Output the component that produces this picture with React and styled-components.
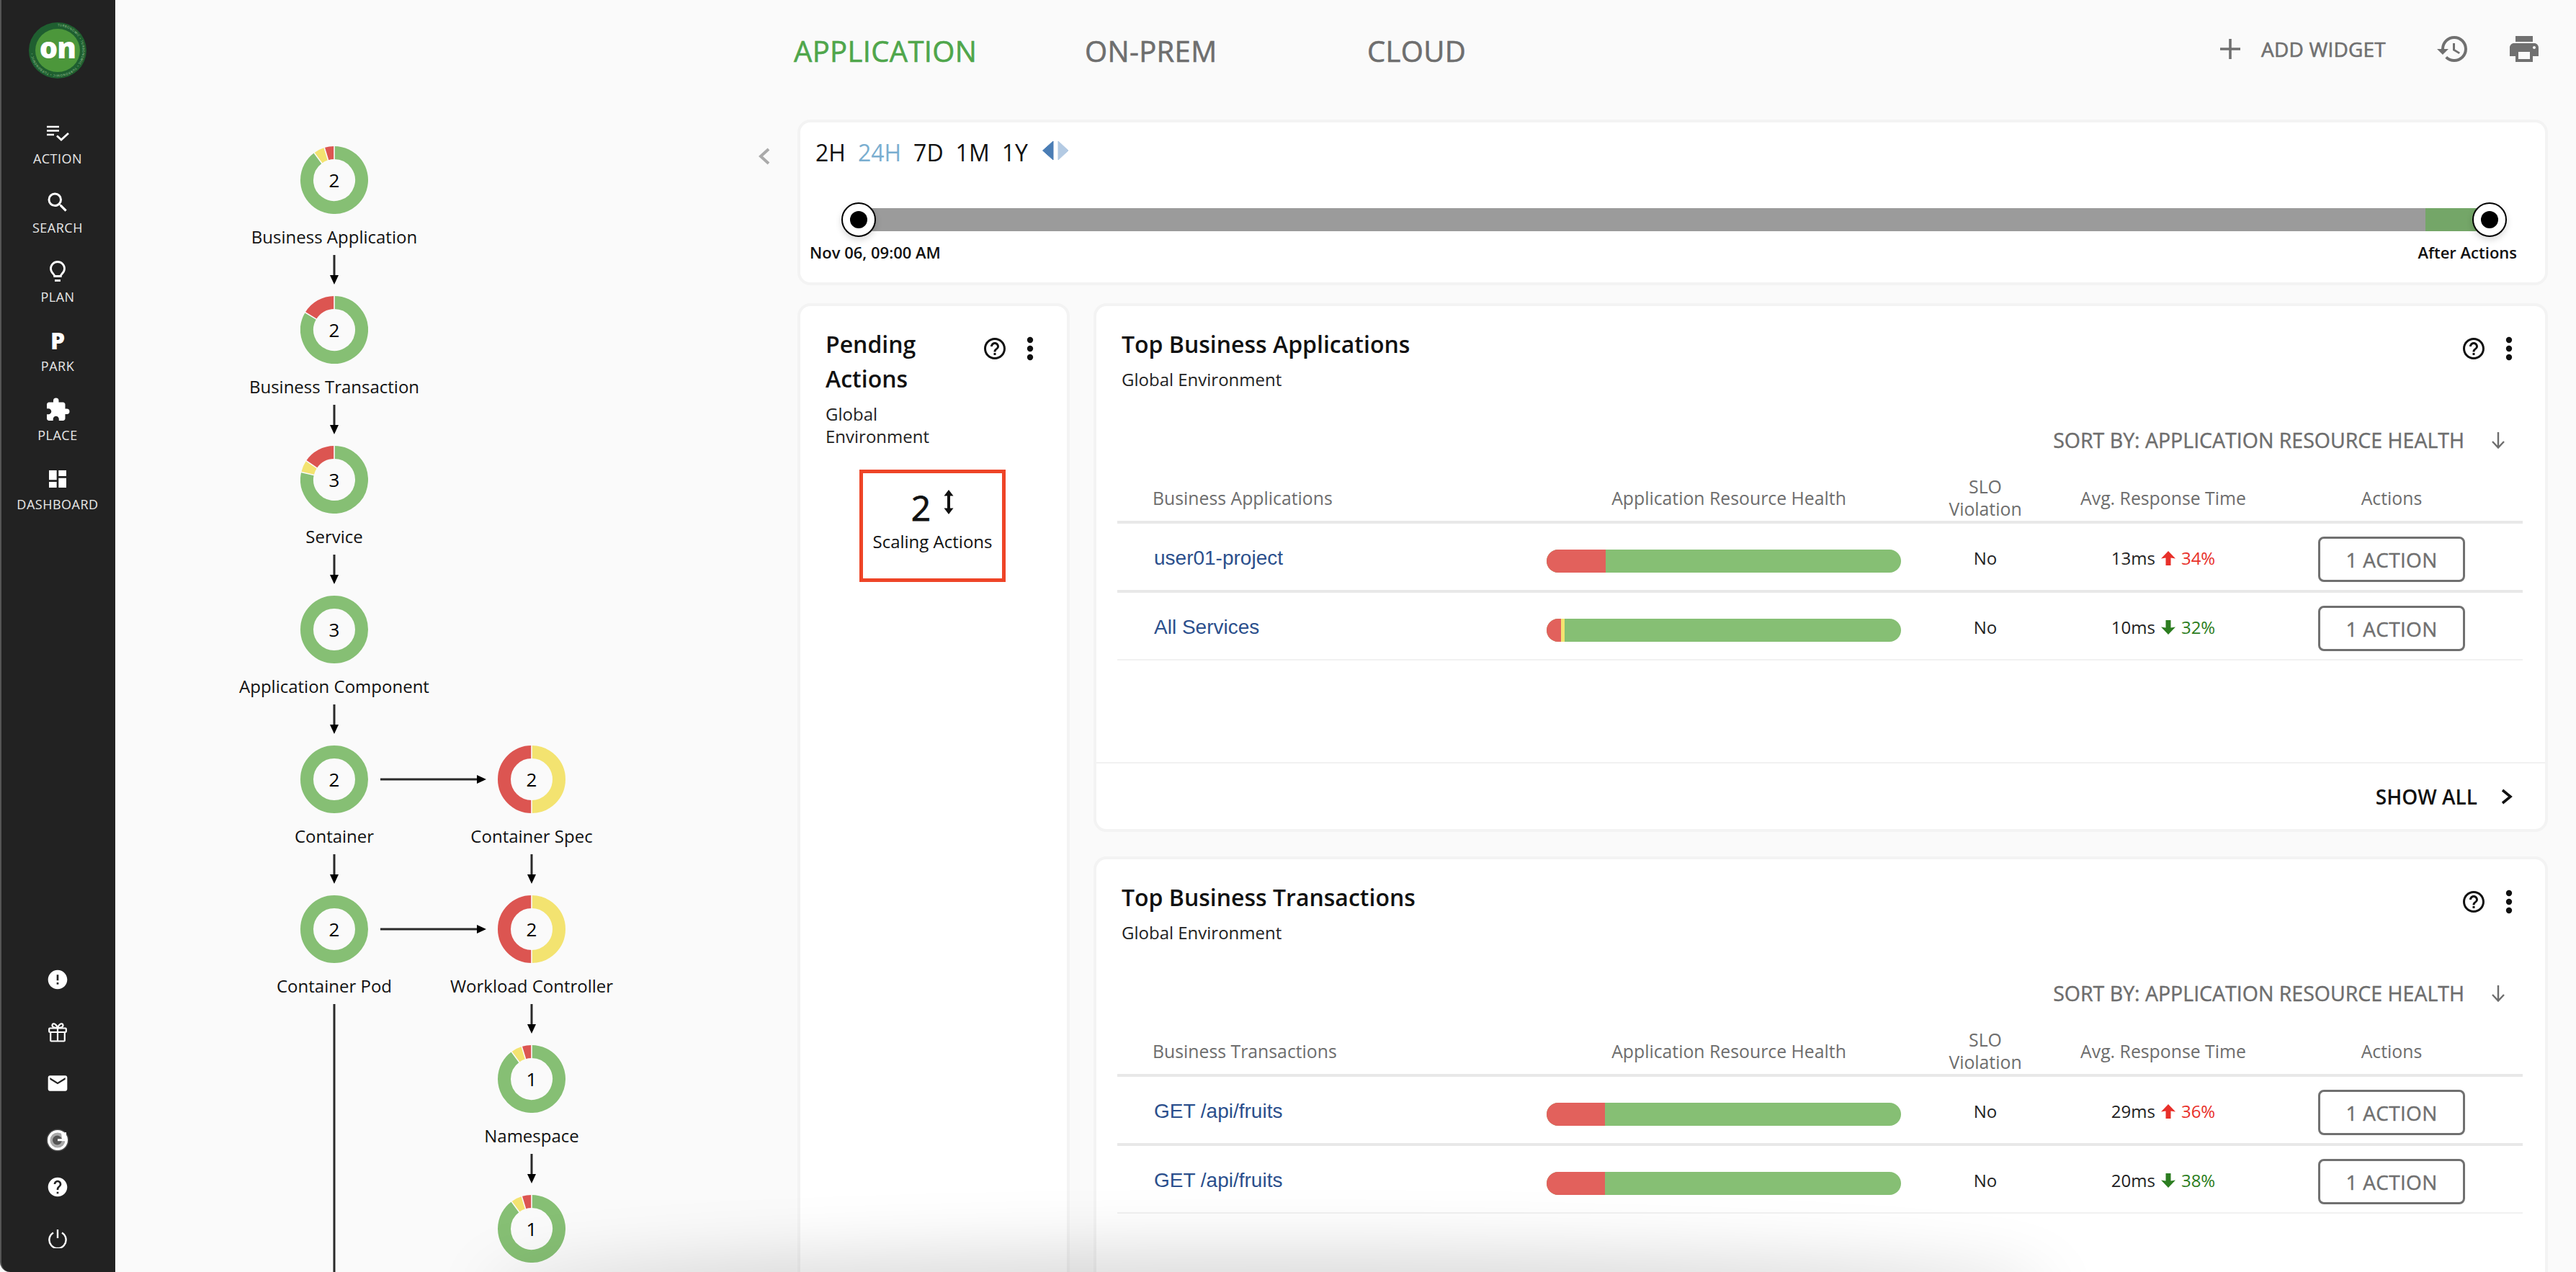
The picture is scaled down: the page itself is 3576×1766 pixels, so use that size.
import React from "react";
import styled, { createGlobalStyle } from "styled-components";
import { MdHistory, MdPrint, MdHelpOutline, MdHelp, MdError, MdEmail, MdExtension, MdDashboard, MdSearch } from "react-icons/md";

const Global = createGlobalStyle`
  html, body { margin: 0; padding: 0; background: #fafafa; }
  * { box-sizing: border-box; }
  body { font-family: "Open Sans", "Liberation Sans", sans-serif; color: #111; }
`;

const Root = styled.div`
  position: relative;
  display: flex;
  width: 3576px;
  height: 1766px;
  overflow: hidden;
  background: #fafafa;
`;

/* ---------- sidebar ---------- */
const Sidebar = styled.aside`
  flex: 0 0 160px;
  display: flex;
  flex-direction: column;
  align-items: center;
  padding: 31px 0 26px;
  background: #222;
  border-left: 2px solid #555;
  border-bottom-left-radius: 14px;
  color: #fff;
`;
const Logo = styled.svg`
  width: 80px;
  height: 78px;
  flex: none;
  margin-left: -2px;
`;
const Nav = styled.nav`
  margin-top: 58px;
  display: flex;
  flex-direction: column;
  align-items: center;
  margin-left: -2px;
`;
const NavItem = styled.div`
  height: 96px;
  display: flex;
  flex-direction: column;
  align-items: center;
`;
const NavIcon = styled.div`
  height: 36px;
  display: flex;
  align-items: center;
  justify-content: center;
  color: #fff;
  font-weight: 800;
  font-size: 32px;
  line-height: 36px;
`;
const NavLabel = styled.div`
  margin-top: 5px;
  font-size: 18px;
  line-height: 24px;
  color: #e8e8e8;
  letter-spacing: 0.5px;
`;
const Utilities = styled.div`
  margin-top: auto;
  margin-left: -2px;
  display: flex;
  flex-direction: column;
  align-items: center;
`;
const Utility = styled.div`
  width: 40px;
  height: 40px;
  margin-top: ${(p) => p.$gap || 0}px;
  display: flex;
  align-items: center;
  justify-content: center;
  color: #fff;
`;

/* ---------- top bar ---------- */
const Content = styled.div`
  flex: 1;
  min-width: 0;
  display: flex;
  flex-direction: column;
`;
const TopBar = styled.header`
  flex: 0 0 166px;
  display: flex;
  align-items: center;
  justify-content: space-between;
  padding: 0 48px 30px 942px;
`;
const Tabs = styled.div`
  display: grid;
  grid-template-columns: 404px 392px auto;
  margin-top: 6px;
`;
const Tab = styled.div`
  font-size: 40px;
  line-height: 54px;
  letter-spacing: 0.35px;
  -webkit-text-stroke: 0.6px currentColor;
  color: ${(p) => (p.$active ? "#4fa64b" : "#6e6e6e")};
`;
const TopActions = styled.div`
  display: flex;
  align-items: center;
  color: #707070;
`;
const AddWidget = styled.div`
  display: flex;
  align-items: center;
  gap: 29px;
  margin-right: 69px;
  font-size: 28px;
  line-height: 38px;
  letter-spacing: 0.2px;
  -webkit-text-stroke: 0.6px currentColor;
`;
const PrintSlot = styled.div`
  margin-left: 51px;
  display: flex;
`;

/* ---------- body ---------- */
const Body = styled.div`
  flex: 1;
  min-height: 0;
  display: flex;
`;
const Topology = styled.section`
  flex: 0 0 947px;
  display: flex;
`;
const Graph = styled.div`
  flex: 1;
  padding: 37px 0 0 167px;
  display: grid;
  grid-template-columns: 274px 274px;
  grid-auto-rows: 208px;
  align-content: start;
`;
const Node = styled.div`
  position: relative;
  grid-column: ${(p) => p.$col};
  grid-row: ${(p) => p.$row};
  display: flex;
  flex-direction: column;
  align-items: center;
`;
const DonutBox = styled.div`
  position: relative;
  width: 94px;
  height: 94px;
  flex: none;
  display: flex;
  align-items: center;
  justify-content: center;
  font-size: 26px;
  line-height: 26px;
  color: #000;
`;
const DonutSvg = styled.svg`
  position: absolute;
  inset: 0;
`;
const DonutCount = styled.span`
  position: relative;
`;
const NodeLabel = styled.div`
  margin-top: 16px;
  font-size: 24px;
  line-height: 32px;
  white-space: nowrap;
  color: #111;
`;
const DownArrow = styled.svg`
  flex: none;
  margin-top: 9px;
  display: block;
`;
const SideArrow = styled.svg`
  position: absolute;
  top: 41px;
  left: calc(50% + 64px);
`;
const Collapse = styled.div`
  flex: none;
  margin: 39px 38px 0 0;
`;

const Main = styled.main`
  flex: 0 0 2430px;
  display: flex;
  flex-direction: column;
  gap: 25px;
`;
const panel = `
  background: #fff;
  border: 4px solid #f3f3f3;
  border-radius: 18px;
`;
const Timeline = styled.section`
  ${panel}
  padding: 20px 0 27px;
`;
const Ranges = styled.div`
  display: flex;
  align-items: center;
  gap: 17px;
  padding-left: 21px;
`;
const Range = styled.div`
  font-size: 32px;
  line-height: 44px;
  color: ${(p) => (p.$active ? "#7aaed0" : "#111")};
`;
const Stepper = styled.svg`
  margin: -6px 0 0 2px;
`;
const Track = styled.div`
  position: relative;
  height: 32px;
  margin: 55px 77px 0 81px;
  background: #9b9b9b;
`;
const TrackFill = styled.div`
  position: absolute;
  top: 0;
  right: 0;
  bottom: 0;
  width: 89px;
  background: #74a668;
`;
const Handle = styled.div`
  position: absolute;
  top: -8px;
  ${(p) => (p.$end ? "right: -24px;" : "left: -24px;")}
  width: 48px;
  height: 48px;
  display: flex;
  align-items: center;
  justify-content: center;
  background: #fff;
  border: 2.5px solid #000;
  border-radius: 50%;
  box-shadow: 0 4px 10px rgba(0, 0, 0, 0.15);
  &::after {
    content: "";
    width: 24px;
    height: 24px;
    border-radius: 50%;
    background: #000;
  }
`;
const TrackLabels = styled.div`
  display: flex;
  justify-content: space-between;
  margin-top: 14px;
  padding: 0 39px 0 13px;
  font-size: 22px;
  line-height: 30px;
  font-weight: 600;
`;
const Widgets = styled.div`
  display: flex;
  gap: 33px;
  align-items: stretch;
`;
const Pending = styled.section`
  ${panel}
  flex: 0 0 378px;
  height: 1500px;
  padding: 29px 46px 0 35px;
`;
const WideColumn = styled.div`
  flex: 1;
  display: flex;
  flex-direction: column;
  gap: 34px;
`;
const WideCard = styled.section`
  ${panel}
  height: 734px;
  display: flex;
  flex-direction: column;
`;
const CardHead = styled.div`
  display: flex;
  justify-content: space-between;
  align-items: flex-start;
  padding: ${(p) => (p.$flush ? "0" : "29px 45px 0 35px")};
`;
const TitleBlock = styled.div`
  max-width: ${(p) => (p.$narrow ? "200px" : "none")};
`;
const CardTitle = styled.h2`
  margin: 0;
  font-size: 32px;
  line-height: 48px;
  font-weight: 600;
  color: #111;
`;
const CardSub = styled.div`
  margin-top: 9px;
  font-size: 24px;
  line-height: 31px;
  color: #222;
`;
const CardIcons = styled.div`
  display: flex;
  align-items: center;
  gap: 26px;
  height: 36px;
  margin-top: 12px;
  color: #111;
`;
const ScaleBox = styled.div`
  width: 203px;
  height: 156px;
  margin: 31px 0 0 47px;
  padding-top: 24px;
  border: 5px solid #ee4427;
  text-align: center;
`;
const ScaleRow = styled.div`
  display: flex;
  justify-content: center;
  align-items: flex-start;
  gap: 18px;
  font-size: 48px;
  line-height: 48px;
  -webkit-text-stroke: 0.8px currentColor;
`;
const ScaleArrow = styled.svg`
  margin-top: -1px;
`;
const ScaleText = styled.div`
  margin-top: 7px;
  font-size: 24px;
  line-height: 31px;
  color: #111;
`;
const SortBar = styled.div`
  display: flex;
  justify-content: flex-end;
  align-items: center;
  gap: 36px;
  margin-top: 50px;
  padding-right: 54px;
  font-size: 28.5px;
  line-height: 38px;
  -webkit-text-stroke: 0.4px currentColor;
  color: #6d6d6d;
`;
const Table = styled.div`
  margin: 30px 31px 0 29px;
`;
const columns = `
  display: grid;
  grid-template-columns: 596px 506px 206px 288px 346px 1fr;
  align-items: center;
`;
const HeadRow = styled.div`
  ${columns}
  height: 67px;
  padding-bottom: 4px;
  border-bottom: 4px solid #e8e8e8;
  font-size: 24.8px;
  line-height: 31px;
  color: #6d6d6d;
`;
const HeadCell = styled.div`
  text-align: ${(p) => (p.$left ? "left" : "center")};
  padding-left: ${(p) => (p.$left ? "49px" : "0")};
`;
const Row = styled.div`
  ${columns}
  height: ${(p) => (p.$last ? "94px" : "96px")};
  padding-top: 4px;
  border-bottom: ${(p) => (p.$last ? "2px solid #f1f1f1" : "4px solid #e8e8e8")};
  font-size: 24px;
  line-height: 32px;
  color: #222;
`;
const NameCell = styled.div`
  padding-left: 51px;
  font-family: "Liberation Sans", Arial, sans-serif;
  font-size: 28px;
  line-height: 34px;
  color: #2b4f8c;
`;
const Bar = styled.div`
  display: flex;
  width: 492px;
  height: 32px;
  margin-top: 8px;
  border-radius: 16px;
  overflow: hidden;
  background: #86bf74;
`;
const BarPart = styled.div`
  height: 100%;
  flex: none;
  background: ${(p) => p.$color};
`;
const CenterCell = styled.div`
  display: flex;
  justify-content: center;
  align-items: center;
  gap: 8px;
`;
const Delta = styled.span`
  display: flex;
  align-items: center;
  gap: 8px;
  color: ${(p) => (p.$up ? "#e8302a" : "#2c7d20")};
`;
const ActionButton = styled.div`
  width: 204px;
  height: 63px;
  margin-top: 3px;
  display: flex;
  align-items: center;
  justify-content: center;
  border: 3px solid #707070;
  border-radius: 8px;
  font-size: 28px;
  letter-spacing: 0.3px;
  -webkit-text-stroke: 0.4px currentColor;
  color: #707070;
  background: #fff;
`;
const CardFooter = styled.div`
  margin-top: auto;
  height: 93px;
  display: flex;
  justify-content: flex-end;
  align-items: center;
  gap: 33px;
  padding-right: 45px;
  border-top: 2px solid #f1f1f1;
  font-size: 28px;
  font-weight: 600;
  color: #111;
`;
const WindowShadow = styled.div`
  position: absolute;
  left: 700px;
  width: 2120px;
  bottom: -60px;
  height: 60px;
  pointer-events: none;
  box-shadow: 0 0 90px 30px rgba(0, 0, 0, 0.15);
  border-radius: 50%;
`;

/* ---------- drawings ---------- */
const GREEN = "#86bf74";
const RED = "#dc5551";
const YELLOW = "#f3e370";

const polar = (deg, r) => {
  const a = (deg * Math.PI) / 180;
  return [47 + r * Math.sin(a), 47 - r * Math.cos(a)];
};
function Donut({ count, segments }) {
  let start = 0;
  const parts = [];
  const seps = [];
  if (segments.length > 1) {
    segments.forEach(([color, sweep], i) => {
      const end = start + sweep;
      const [x0, y0] = polar(start, 38);
      const [x1, y1] = polar(end, 38);
      parts.push(
        <path
          key={i}
          d={`M${x0} ${y0}A38 38 0 ${sweep > 180 ? 1 : 0} 1 ${x1} ${y1}`}
          fill="none"
          stroke={color}
          strokeWidth="18"
        />
      );
      start = end;
      const [sx0, sy0] = polar(start, 28);
      const [sx1, sy1] = polar(start, 48);
      seps.push(<line key={i} x1={sx0} y1={sy0} x2={sx1} y2={sy1} stroke="#fafafa" strokeWidth="1.6" />);
    });
  } else {
    parts.push(<circle key="0" cx="47" cy="47" r="38" fill="none" stroke={segments[0][0]} strokeWidth="18" />);
  }
  return (
    <DonutBox>
      <DonutSvg viewBox="0 0 94 94" width="94" height="94">
        {parts}
        {seps}
      </DonutSvg>
      <DonutCount>{count}</DonutCount>
    </DonutBox>
  );
}
function Down({ h = 41 }) {
  return (
    <DownArrow width="14" height={h} viewBox={`0 0 14 ${h}`}>
      <rect x="5.5" y="0" width="3" height={h - 10} fill="#2a2a2a" />
      <path d={`M1 ${h - 13}H13L7 ${h}Z`} fill="#000" />
    </DownArrow>
  );
}
const Right = () => (
  <SideArrow width="147" height="12" viewBox="0 0 147 12">
    <rect x="0" y="4.5" width="136" height="3" fill="#2a2a2a" />
    <path d="M134 0L147 6L134 12Z" fill="#000" />
  </SideArrow>
);
const Line = ({ h }) => (
  <DownArrow width="14" height={h} viewBox={`0 0 14 ${h}`}>
    <rect x="5.5" y="0" width="3" height={h} fill="#2a2a2a" />
  </DownArrow>
);
const Dots = () => (
  <svg width="10" height="34" viewBox="0 0 10 34" fill="currentColor">
    <circle cx="5" cy="5" r="4.2" />
    <circle cx="5" cy="17" r="4.2" />
    <circle cx="5" cy="29" r="4.2" />
  </svg>
);
const Icons = () => (
  <CardIcons>
    <MdHelpOutline size={36} />
    <Dots />
  </CardIcons>
);
const Tri = ({ up }) => (
  <svg width="20" height="20" viewBox="0 0 20 20" fill={up ? "#e8302a" : "#2c7d20"}>
    <path
      d={up ? "M10 0L20 10.5L13.5 9.5V20H6.5V9.5L0 10.5Z" : "M10 20L20 9.5L13.5 10.5V0H6.5V10.5L0 9.5Z"}
    />
  </svg>
);
const LogoMark = () => (
  <Logo viewBox="0 0 80 78">
    <defs>
      <path id="ring" d="M40 5.5a34.5 33.5 0 1 1 -.01 0" />
    </defs>
    <ellipse cx="40" cy="39" rx="40" ry="39" fill="#1f5f30" />
    <text fontFamily="Open Sans" fontSize="4.2" fill="#a9cfa0" letterSpacing="0.6">
      <textPath href="#ring">TURBONOMIC • TURBONOMIC • TURBONOMIC • TURBONOMIC •</textPath>
    </text>
    <ellipse cx="40" cy="39" rx="31" ry="30" fill="#4c973b" />
    <text
      x="40"
      y="50"
      textAnchor="middle"
      fontFamily="Open Sans"
      fontWeight="800"
      fontSize="40"
      fill="#fff"
      letterSpacing="-1"
    >
      on
    </text>
  </Logo>
);
const ActionIcon = () => (
  <svg width="32" height="24" viewBox="0 0 32 24" fill="none" stroke="#fff" strokeWidth="2.4">
    <path d="M1 3H18M1 8.5H18M1 14H11" />
    <path d="M15 15.5L21 21L31 12" strokeWidth="2.8" />
  </svg>
);
const BulbIcon = () => (
  <svg width="22" height="30" viewBox="0 0 22 30" fill="none" stroke="#fff" strokeWidth="2.8">
    <path d="M11 1.5A9.5 9.5 0 0 0 1.5 11c0 3.3 1.7 5.6 3.6 7.4 1.2 1.1 1.6 2.1 1.6 3.1h8.6c0-1 .4-2 1.6-3.1 1.9-1.8 3.6-4.1 3.6-7.4A9.5 9.5 0 0 0 11 1.5Z" />
    <path d="M7 27.5H15" />
  </svg>
);
const GiftIcon = () => (
  <svg width="26" height="28" viewBox="0 0 26 28" fill="none" stroke="#fff" strokeWidth="2.2">
    <rect x="1.2" y="8.5" width="23.6" height="5.5" rx="1" />
    <rect x="3.2" y="14" width="19.6" height="12.5" rx="1" />
    <path d="M13 8.5V26.5" />
    <path d="M13 8C11 2 6 .5 5.5 4.5 5.2 7 9 8 13 8ZM13 8C15 2 20 .5 20.5 4.5 20.8 7 17 8 13 8Z" />
  </svg>
);
const GIcon = () => (
  <svg width="32" height="32" viewBox="0 0 32 32">
    <circle cx="16" cy="16" r="15.5" fill="#4a4a4a" />
    <circle cx="16" cy="16" r="14" fill="#fff" />
    <circle cx="16" cy="16" r="10.5" fill="#a8a8a8" />
    <circle cx="15.5" cy="16" r="6.5" fill="#555" />
    <path d="M16 14.2H30V17.2H16Z" fill="#fff" />
    <path d="M21 6L28 5V14H22Z" fill="#fff" />
  </svg>
);
const PowerIcon = () => (
  <svg width="26" height="26" viewBox="0 0 26 26" fill="none" stroke="#fff" strokeWidth="2.4">
    <path d="M7 4.5A11.6 11.6 0 1 0 19 4.5" />
    <path d="M13 0V12" />
  </svg>
);
const Plus = () => (
  <svg width="28" height="28" viewBox="0 0 28 28" stroke="#707070" strokeWidth="3.6">
    <path d="M14 0V28M0 14H28" />
  </svg>
);

const NODES = [
  { label: "Business Application", count: 2, col: 1, row: 1, seg: [[GREEN, 323.6], [YELLOW, 19.4], [RED, 17]], down: 41 },
  { label: "Business Transaction", count: 2, col: 1, row: 2, seg: [[GREEN, 301], [RED, 59]], down: 41 },
  { label: "Service", count: 3, col: 1, row: 3, seg: [[GREEN, 283], [YELLOW, 21], [RED, 56]], down: 41 },
  { label: "Application Component", count: 3, col: 1, row: 4, seg: [[GREEN, 360]], down: 41 },
  { label: "Container", count: 2, col: 1, row: 5, seg: [[GREEN, 360]], down: 41, side: true },
  { label: "Container Pod", count: 2, col: 1, row: 6, seg: [[GREEN, 360]], line: 380, side: true },
  { label: "Container Spec", count: 2, col: 2, row: 5, seg: [[YELLOW, 180], [RED, 180]], down: 41 },
  { label: "Workload Controller", count: 2, col: 2, row: 6, seg: [[YELLOW, 180], [RED, 180]], down: 41 },
  { label: "Namespace", count: 1, col: 2, row: 7, seg: [[GREEN, 323.6], [YELLOW, 19.4], [RED, 17]], down: 41 },
  { count: 1, col: 2, row: 8, seg: [[GREEN, 323.6], [YELLOW, 19.4], [RED, 17]] },
];

const NAV = [
  ["ACTION", <ActionIcon />],
  ["SEARCH", <MdSearch size={36} />],
  ["PLAN", <BulbIcon />],
  ["PARK", "P"],
  ["PLACE", <MdExtension size={36} />],
  ["DASHBOARD", <MdDashboard size={32} />],
];

function Widget({ title, nameHead, rows, footer }) {
  return (
    <WideCard>
      <CardHead>
        <TitleBlock>
          <CardTitle>{title}</CardTitle>
          <CardSub>Global Environment</CardSub>
        </TitleBlock>
        <Icons />
      </CardHead>
      <SortBar>
        <span>SORT BY: APPLICATION RESOURCE HEALTH</span>
        <svg width="22" height="24" viewBox="0 0 22 24" fill="none" stroke="#6d6d6d" strokeWidth="2.4">
          <path d="M11 1V22M3 14L11 22.5L19 14" />
        </svg>
      </SortBar>
      <Table>
        <HeadRow>
          <HeadCell $left>{nameHead}</HeadCell>
          <HeadCell>Application Resource Health</HeadCell>
          <HeadCell>
            SLO
            <br />
            Violation
          </HeadCell>
          <HeadCell>Avg. Response Time</HeadCell>
          <HeadCell>Actions</HeadCell>
        </HeadRow>
        {rows.map((r, i) => (
          <Row key={i} $last={i === rows.length - 1}>
            <NameCell>{r.name}</NameCell>
            <Bar>
              <BarPart $color="#e2615c" style={{ width: r.red }} />
              {r.yellow ? <BarPart $color={YELLOW} style={{ width: r.yellow }} /> : null}
            </Bar>
            <CenterCell>No</CenterCell>
            <CenterCell>
              <span>{r.ms}</span>
              <Delta $up={r.up}>
                <Tri up={r.up} />
                {r.pct}
              </Delta>
            </CenterCell>
            <CenterCell>
              <ActionButton>1 ACTION</ActionButton>
            </CenterCell>
          </Row>
        ))}
      </Table>
      {footer ? (
        <CardFooter>
          <span>SHOW ALL</span>
          <svg width="16" height="22" viewBox="0 0 16 22" fill="none" stroke="#111" strokeWidth="3.6">
            <path d="M2 2L13 11L2 20" />
          </svg>
        </CardFooter>
      ) : null}
    </WideCard>
  );
}

export default function App() {
  return (
    <Root>
      <Global />
      <Sidebar>
        <LogoMark />
        <Nav>
          {NAV.map(([label, icon]) => (
            <NavItem key={label}>
              <NavIcon>{icon}</NavIcon>
              <NavLabel>{label}</NavLabel>
            </NavItem>
          ))}
        </Nav>
        <Utilities>
          <Utility><MdError size={32} /></Utility>
          <Utility $gap={33}><GiftIcon /></Utility>
          <Utility $gap={31}><MdEmail size={32} /></Utility>
          <Utility $gap={39}><GIcon /></Utility>
          <Utility $gap={25}><MdHelp size={32} /></Utility>
          <Utility $gap={32}><PowerIcon /></Utility>
        </Utilities>
      </Sidebar>
      <Content>
        <TopBar>
          <Tabs>
            <Tab $active>APPLICATION</Tab>
            <Tab>ON-PREM</Tab>
            <Tab>CLOUD</Tab>
          </Tabs>
          <TopActions>
            <AddWidget>
              <Plus />
              <span>ADD WIDGET</span>
            </AddWidget>
            <MdHistory size={48} />
            <PrintSlot><MdPrint size={48} /></PrintSlot>
          </TopActions>
        </TopBar>
        <Body>
          <Topology>
            <Graph>
              {NODES.map((n, i) => (
                <Node key={i} $col={n.col} $row={n.row}>
                  <Donut count={n.count} segments={n.seg} />
                  {n.label ? <NodeLabel>{n.label}</NodeLabel> : null}
                  {n.down ? <Down h={n.down} /> : null}
                  {n.line ? <Line h={n.line} /> : null}
                  {n.side ? <Right /> : null}
                </Node>
              ))}
            </Graph>
            <Collapse>
              <svg width="16" height="24" viewBox="0 0 16 24" fill="none" stroke="#aaa" strokeWidth="4">
                <path d="M14 2L3 12L14 22" />
              </svg>
            </Collapse>
          </Topology>
          <Main>
            <Timeline>
              <Ranges>
                <Range>2H</Range>
                <Range $active>24H</Range>
                <Range>7D</Range>
                <Range>1M</Range>
                <Range>1Y</Range>
                <Stepper width="38" height="28" viewBox="0 0 38 28">
                  <path d="M16 1V27L1.5 14Z" fill="#4a7db5" stroke="#4a7db5" strokeLinejoin="round" />
                  <path d="M23 1V27L37 14Z" fill="#b3cae3" stroke="#b3cae3" strokeLinejoin="round" />
                </Stepper>
              </Ranges>
              <Track>
                <TrackFill />
                <Handle />
                <Handle $end />
              </Track>
              <TrackLabels>
                <span>Nov 06, 09:00 AM</span>
                <span>After Actions</span>
              </TrackLabels>
            </Timeline>
            <Widgets>
              <Pending>
                <CardHead $flush>
                  <TitleBlock $narrow>
                    <CardTitle>Pending Actions</CardTitle>
                    <CardSub>Global Environment</CardSub>
                  </TitleBlock>
                  <Icons />
                </CardHead>
                <ScaleBox>
                  <ScaleRow>
                    <span>2</span>
                    <ScaleArrow width="14" height="34" viewBox="0 0 14 34" fill="#111">
                      <path d="M7 0L13.5 8.5H9V25.5H13.5L7 34L.5 25.5H5V8.5H.5Z" />
                    </ScaleArrow>
                  </ScaleRow>
                  <ScaleText>Scaling Actions</ScaleText>
                </ScaleBox>
              </Pending>
              <WideColumn>
                <Widget
                  footer
                  title="Top Business Applications"
                  nameHead="Business Applications"
                  rows={[
                    { name: "user01-project", red: 82, ms: "13ms", up: true, pct: "34%" },
                    { name: "All Services", red: 20, yellow: 5, ms: "10ms", up: false, pct: "32%" },
                  ]}
                />
                <Widget
                  title="Top Business Transactions"
                  nameHead="Business Transactions"
                  rows={[
                    { name: "GET /api/fruits", red: 81, ms: "29ms", up: true, pct: "36%" },
                    { name: "GET /api/fruits", red: 81, ms: "20ms", up: false, pct: "38%" },
                  ]}
                />
              </WideColumn>
            </Widgets>
          </Main>
        </Body>
      </Content>
      <WindowShadow />
    </Root>
  );
}
